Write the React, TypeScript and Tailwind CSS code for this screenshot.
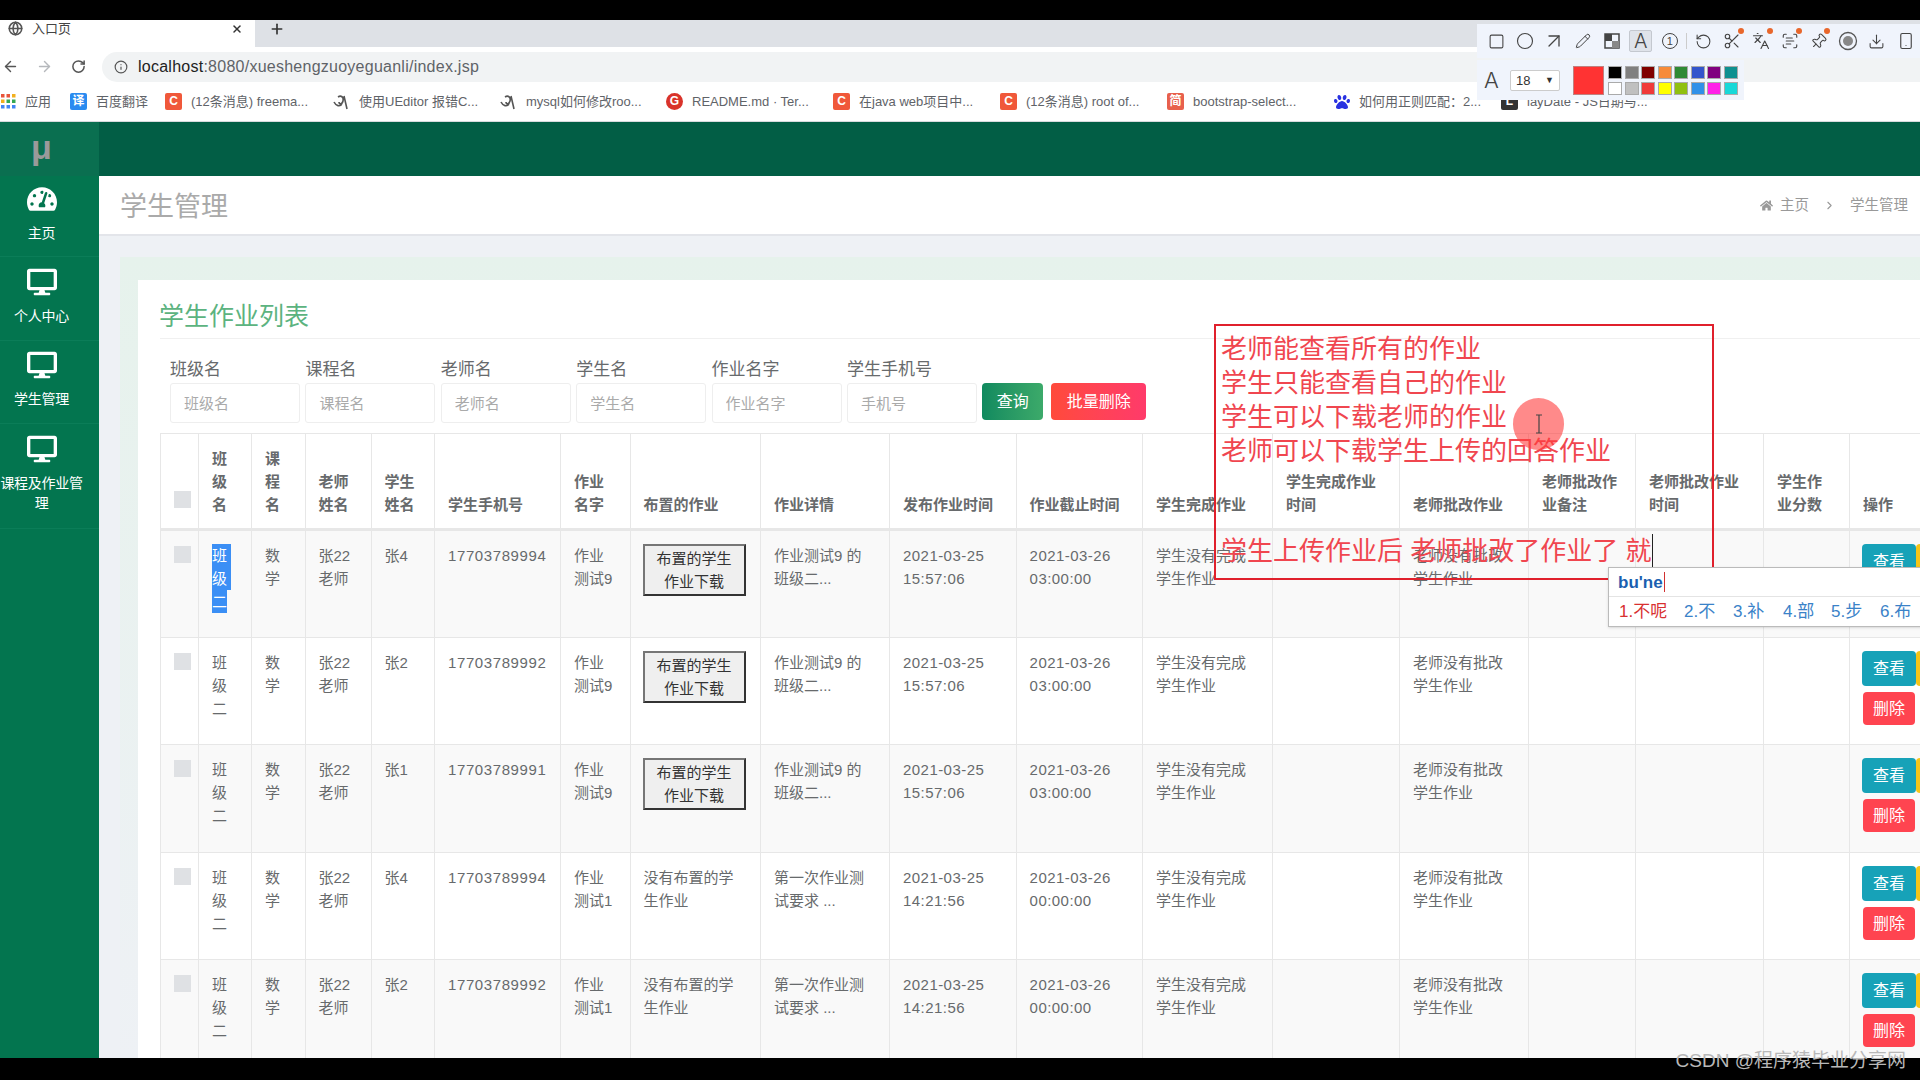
import { ArrowLeft, ArrowRight, ArrowUpRight, ChevronRight, Circle, Download, Globe, Info, Languages, Pencil, Pin, RotateCcw, RotateCw, ScanText, Scissors, Smartphone, Square, X, Plus } from "lucide-react";
import { FaDesktop, FaHome, FaPaw, FaTachometerAlt } from "react-icons/fa";
import type { ReactNode } from "react";

const colWidths = [
  "w-[38px]", "w-[53px]", "w-[53.5px]", "w-[66px]", "w-[63.5px]", "w-[126px]", "w-[69.5px]", "w-[130.5px]", "w-[129px]",
  "w-[126.6px]", "w-[126.4px]", "w-[130px]", "w-[127px]", "w-[129px]", "w-[107px]", "w-[128px]", "w-[86px]", "w-[111px]",
];

const headers = [
  "", "班\n级\n名", "课\n程\n名", "老师\n姓名", "学生\n姓名", "学生手机号", "作业\n名字", "布置的作业", "作业详情", "发布作业时间",
  "作业截止时间", "学生完成作业", "学生完成作业\n时间", "老师批改作业", "老师批改作\n业备注", "老师批改作业\n时间", "学生作\n业分数", "操作",
];

const rows = [
  { student: "张4", phone: "17703789994", work: "作业\n测试9", assigned: true, detail: "作业测试9 的\n班级二...", pub: "2021-03-25\n15:57:06", end: "2021-03-26\n03:00:00" },
  { student: "张2", phone: "17703789992", work: "作业\n测试9", assigned: true, detail: "作业测试9 的\n班级二...", pub: "2021-03-25\n15:57:06", end: "2021-03-26\n03:00:00" },
  { student: "张1", phone: "17703789991", work: "作业\n测试9", assigned: true, detail: "作业测试9 的\n班级二...", pub: "2021-03-25\n15:57:06", end: "2021-03-26\n03:00:00" },
  { student: "张4", phone: "17703789994", work: "作业\n测试1", assigned: false, detail: "第一次作业测\n试要求 ...", pub: "2021-03-25\n14:21:56", end: "2021-03-26\n00:00:00" },
  { student: "张2", phone: "17703789992", work: "作业\n测试1", assigned: false, detail: "第一次作业测\n试要求 ...", pub: "2021-03-25\n14:21:56", end: "2021-03-26\n00:00:00" },
  { student: "张1", phone: "17703789991", work: "作业\n测试1", assigned: false, detail: "第一次作业测\n试要求 ...", pub: "2021-03-25\n14:21:56", end: "2021-03-26\n00:00:00" },
];

const filters = [
  { label: "班级名", placeholder: "班级名" },
  { label: "课程名", placeholder: "课程名" },
  { label: "老师名", placeholder: "老师名" },
  { label: "学生名", placeholder: "学生名" },
  { label: "作业名字", placeholder: "作业名字" },
  { label: "学生手机号", placeholder: "手机号" },
];

const swatches = [
  "bg-[#000000]", "bg-[#808080]", "bg-[#800000]", "bg-[#f78b3a]", "bg-[#2f8a35]", "bg-[#3355cc]", "bg-[#800080]", "bg-[#0e9090]",
  "bg-[#ffffff]", "bg-[#c0c0c0]", "bg-[#f03a3a]", "bg-[#ffff00]", "bg-[#90c010]", "bg-[#3090e8]", "bg-[#ff20e8]", "bg-[#18d8d8]",
];

function LetterIcon({ text, className }: { text: string; className: string }) {
  return (
    <span className={`flex h-[17px] w-[17px] shrink-0 items-center justify-center rounded-[2px] text-[12px] font-bold text-white ${className}`}>
      {text}
    </span>
  );
}

function CurlIcon() {
  return (
    <svg viewBox="0 0 18 18" className="h-[18px] w-[18px] shrink-0" fill="none" stroke="#555" strokeWidth="1.6">
      <path d="M2 9c2 4 6 5 8 2M6 4c3-2 6 0 5 4s-4 3-4 1M12 3l3 13" />
    </svg>
  );
}

function Bookmark({ icon, text, className = "w-[167px]" }: { icon: ReactNode; text: string; className?: string }) {
  return (
    <div className={`flex shrink-0 items-center gap-[9px] ${className}`}>
      {icon}
      <span className="whitespace-nowrap text-[13px] text-[#5f6368]">{text}</span>
    </div>
  );
}

function SideItem({ icon, label, className }: { icon: ReactNode; label: string; className: string }) {
  return (
    <div className={`flex flex-col items-center border-b border-[#0b7d58] pr-[16px] text-white ${className}`}>
      {icon}
      <span className="mt-[10px] text-center text-[14px] leading-[20px] tracking-[-0.3px]">{label}</span>
    </div>
  );
}

function ToolIcon({ children, dot }: { children: ReactNode; dot?: boolean }) {
  return (
    <div className="relative flex h-[29px] w-[29.4px] items-center justify-center text-[#444]">
      {children}
      {dot && <span className="absolute right-[3px] top-[1px] h-[6px] w-[6px] rounded-full bg-[#e8672c]" />}
    </div>
  );
}

function Mosaic() {
  return (
    <svg viewBox="0 0 16 16" className="h-[16px] w-[16px]">
      <rect x="1" y="1" width="14" height="14" fill="none" stroke="#444" strokeWidth="1.5" />
      <rect x="1" y="1" width="7" height="7" fill="#444" />
      <rect x="8" y="8" width="7" height="7" fill="#888" />
    </svg>
  );
}

function RecordIcon() {
  return (
    <svg viewBox="0 0 20 20" className="h-[20px] w-[20px]">
      <circle cx="10" cy="10" r="8.5" fill="none" stroke="#555" strokeWidth="1.3" />
      <circle cx="10" cy="10" r="5" fill="#888" />
    </svg>
  );
}

function Cell({ children, className = "" }: { children?: ReactNode; className?: string }) {
  return (
    <td className={`whitespace-pre-line border border-[#e7e7e7] px-[13px] pt-[13px] align-top ${className}`}>{children}</td>
  );
}

export default function App() {
  return (
    <div className="relative flex h-screen w-[1920px] flex-col overflow-hidden bg-white font-['Liberation_Sans','Noto_Sans_CJK_SC',sans-serif] text-[15px] leading-[23px] text-[#676a6c]">
      <div className="h-[20px] shrink-0 bg-black" />

      {/* browser tab strip */}
      <div className="flex h-[27px] shrink-0 items-start bg-[#dee1e6]">
        <div className="flex h-full w-[255px] items-start bg-white pl-[8px] pr-[12px] pt-[1px]">
          <Globe className="h-[15px] w-[15px] text-[#555]" strokeWidth={2.5} />
          <span className="ml-[9px] flex-1 text-[13px] leading-[16px] text-[#444]">入口页</span>
          <X className="mt-[2px] h-[12px] w-[12px] text-[#333]" strokeWidth={3} />
        </div>
        <Plus className="ml-[14px] mt-[1px] h-[16px] w-[16px] text-[#333]" strokeWidth={2.5} />
      </div>

      {/* address bar */}
      <div className="flex h-[35px] shrink-0 items-start bg-white pl-[2px] pt-[5px]">
        <ArrowLeft className="mt-[6px] h-[17px] w-[17px] text-[#555]" />
        <ArrowRight className="ml-[17px] mt-[6px] h-[17px] w-[17px] text-[#b5b8bc]" />
        <RotateCw className="ml-[18px] mt-[7px] h-[15px] w-[15px] text-[#555]" strokeWidth={2.4} />
        <div className="ml-[16px] flex h-[30px] flex-1 items-center rounded-l-[15px] bg-[#f1f3f4] pl-[12px]">
          <Info className="h-[14px] w-[14px] text-[#555]" />
          <span className="mb-[2px] ml-[10px] text-[16px] tracking-[0.25px] text-[#5f6368]">
            <span className="text-[#222]">localhost</span>:8080/xueshengzuoyeguanli/index.jsp
          </span>
        </div>
      </div>

      {/* bookmarks */}
      <div className="flex h-[40px] shrink-0 items-center border-b border-[#d8dadd] bg-white pl-[1px]">
        <div className="flex w-[69px] shrink-0 items-center gap-[9px]">
          <svg viewBox="0 0 15 15" className="h-[15px] w-[15px] shrink-0">
            <g fill="#e8543a"><rect x="0" y="0" width="3.5" height="3.5" /><rect x="5.5" y="0" width="3.5" height="3.5" /></g>
            <g fill="#f2b01e"><rect x="11" y="0" width="3.5" height="3.5" /><rect x="0" y="5.5" width="3.5" height="3.5" /></g>
            <g fill="#34a853"><rect x="5.5" y="5.5" width="3.5" height="3.5" /><rect x="11" y="5.5" width="3.5" height="3.5" /></g>
            <g fill="#4285f4"><rect x="0" y="11" width="3.5" height="3.5" /><rect x="5.5" y="11" width="3.5" height="3.5" /><rect x="11" y="11" width="3.5" height="3.5" /></g>
          </svg>
          <span className="text-[13px] text-[#5f6368]">应用</span>
        </div>
        <Bookmark className="w-[95px]" icon={<LetterIcon text="译" className="bg-[#2a8bf0]" />} text="百度翻译" />
        <Bookmark icon={<LetterIcon text="C" className="bg-[#f0583a]" />} text="(12条消息) freema..." />
        <Bookmark icon={<CurlIcon />} text="使用UEditor 报错C..." />
        <Bookmark icon={<CurlIcon />} text="mysql如何修改roo..." />
        <Bookmark icon={<LetterIcon text="G" className="rounded-full bg-[#d9332a]" />} text="README.md · Ter..." />
        <Bookmark icon={<LetterIcon text="C" className="bg-[#f0583a]" />} text="在java web项目中..." />
        <Bookmark icon={<LetterIcon text="C" className="bg-[#f0583a]" />} text="(12条消息) root of..." />
        <Bookmark icon={<LetterIcon text="简" className="bg-[#e8604c]" />} text="bootstrap-select..." />
        <Bookmark icon={<FaPaw className="h-[16px] w-[16px] shrink-0 text-[#2932e1]" />} text="如何用正则匹配：2..." />
        <Bookmark icon={<LetterIcon text="L" className="bg-[#333333]" />} text="layDate - JS日期与..." />
      </div>

      {/* app */}
      <div className="flex min-h-0 flex-1">
        <aside className="flex w-[99px] shrink-0 flex-col bg-[#03754f]">
          <div className="flex h-[54px] items-center justify-center bg-[#0a6f50] pb-[3px] pr-[16px] text-[34px] font-bold text-[#9a9a9a]">μ</div>
          <SideItem className="h-[81px] pt-[9px]" icon={<FaTachometerAlt className="h-[28px] w-[30px]" />} label="主页" />
          <SideItem className="h-[84px] pt-[11px]" icon={<FaDesktop className="h-[28px] w-[30px]" />} label="个人中心" />
          <SideItem className="h-[83px] pt-[10px]" icon={<FaDesktop className="h-[28px] w-[30px]" />} label="学生管理" />
          <SideItem className="h-[105px] pt-[11px]" icon={<FaDesktop className="h-[28px] w-[30px]" />} label="课程及作业管理" />
        </aside>

        <main className="flex min-w-0 flex-1 flex-col bg-[#eef1f5]">
          <div className="h-[54px] shrink-0 bg-[#025e45]" />
          <div className="flex h-[60px] shrink-0 items-center justify-between border-b-2 border-[#e3e5ea] bg-white pl-[21px] pr-[12px]">
            <span className="pt-[4px] text-[27px] text-[#aaaaaa]">学生管理</span>
            <div className="flex items-center text-[14.5px] text-[#999999]">
              <FaHome className="mr-[7px] h-[13px] w-[13px]" />
              <span>主页</span>
              <ChevronRight className="mx-[14px] h-[13px] w-[13px]" />
              <span>学生管理</span>
            </div>
          </div>

          <div className="min-h-0 flex-1 pl-[21px] pt-[21px]">
            <div className="h-full bg-gradient-to-b from-[#e6f2ec] to-[#eef1f5] pl-[18px] pt-[23px]">
              <div className="h-[900px] bg-white pl-[22px]">
                <div className="flex h-[59px] items-center border-b border-[#f0f0f0] pt-[15px] text-[25px] text-[#5cb380]">
                  <span className="-ml-[1px]">学生作业列表</span>
                </div>

                <div className="flex items-end pl-[10px] pt-[20px]">
                  {filters.map((f) => (
                    <div key={f.label} className="mr-[5.4px] flex w-[130px] shrink-0 flex-col">
                      <label className="h-[24px] text-[17px] leading-[21px]">{f.label}</label>
                      <input
                        placeholder={f.placeholder}
                        className="h-[40px] w-full rounded-[3px] border border-[#eeeeee] bg-white pl-[13px] text-[15px] outline-none placeholder:text-[#aaaaaa]"
                      />
                    </div>
                  ))}
                  <div className="flex h-[40px] items-start">
                    <button className="h-[37px] w-[61px] rounded-[4px] bg-gradient-to-r from-[#0f8a5f] to-[#3caa6a] text-[16px] text-white">查询</button>
                    <button className="ml-[8px] h-[37px] w-[95px] rounded-[4px] bg-gradient-to-r from-[#ff4a3a] to-[#ff3a6a] text-[16px] text-white">批量删除</button>
                  </div>
                </div>

                <table className="mt-[10px] w-[1800px] table-fixed border-collapse">
                  <colgroup>
                    {colWidths.map((w, i) => (
                      <col key={i} className={w} />
                    ))}
                  </colgroup>
                  <thead>
                    <tr className="h-[96px]">
                      {headers.map((h, i) => (
                        <th key={i} className="whitespace-pre-line border border-b-[3px] border-[#e7e7e7] px-[13px] pb-[12px] text-left align-bottom font-bold">
                          {i === 0 ? <span className="mb-[8px] block h-[17px] w-[17px] bg-[#dfe1e4]" /> : h}
                        </th>
                      ))}
                    </tr>
                  </thead>
                  <tbody>
                    {rows.map((r, i) => (
                      <tr key={i} className={`h-[107.5px] ${i % 2 === 0 ? "bg-[#f9f9f9]" : "bg-white"}`}>
                        <Cell><span className="mt-[2px] block h-[17px] w-[17px] bg-[#dfe1e4]" /></Cell>
                        <Cell>
                          {i === 0 ? (
                            <span className="block text-white">
                              <span className="block w-[19px] bg-[#3b8ff5]">班</span>
                              <span className="block w-[19px] bg-[#3b8ff5]">级</span>
                              <span className="block w-[15px] bg-[#3b8ff5]">二</span>
                            </span>
                          ) : "班\n级\n二"}
                        </Cell>
                        <Cell>{"数\n学"}</Cell>
                        <Cell>{"张22\n老师"}</Cell>
                        <Cell>{r.student}</Cell>
                        <Cell className="tracking-[0.6px]">{r.phone}</Cell>
                        <Cell>{r.work}</Cell>
                        <Cell>
                          {r.assigned ? (
                            <button className="-ml-[1px] h-[52px] w-[103px] border-2 border-b-[#333333] border-l-[#767676] border-r-[#333333] border-t-[#767676] bg-[#efefef] text-[#333333]">
                              {"布置的学生"}
                              <br />
                              {"作业下载"}
                            </button>
                          ) : "没有布置的学\n生作业"}
                        </Cell>
                        <Cell>{r.detail}</Cell>
                        <Cell className="tracking-[0.45px]">{r.pub}</Cell>
                        <Cell className="tracking-[0.45px]">{r.end}</Cell>
                        <Cell>{"学生没有完成\n学生作业"}</Cell>
                        <Cell />
                        <Cell>{"老师没有批改\n学生作业"}</Cell>
                        <Cell />
                        <Cell />
                        <Cell />
                        <Cell>
                          <div className="flex -ml-[1px]">
                            <button className="h-[35px] w-[54px] shrink-0 rounded-[4px] bg-[#17a2b8] text-[16px] text-white">查看</button>
                            <span className="h-[35px] w-[20px] shrink-0 rounded-[4px] bg-[#f5c518]" />
                          </div>
                          <button className="mt-[6px] block h-[33px] w-[52px] rounded-[4px] bg-[#ff4450] text-[16px] text-white">删除</button>
                        </Cell>
                      </tr>
                    ))}
                  </tbody>
                </table>
              </div>
            </div>
          </div>
        </main>
      </div>

      <div className="h-[22px] shrink-0 bg-black" />

      {/* screenshot tool, upper row */}
      <div className="absolute left-[1477px] top-[24px] flex h-[34px] w-[443px] items-center bg-[#f0f4fc] pl-[5px]">
        <ToolIcon><Square className="h-[17px] w-[17px]" strokeWidth={1.5} /></ToolIcon>
        <ToolIcon><Circle className="h-[18px] w-[18px]" strokeWidth={1.5} /></ToolIcon>
        <ToolIcon><ArrowUpRight className="h-[24px] w-[24px]" strokeWidth={1.3} /></ToolIcon>
        <ToolIcon><Pencil className="h-[16px] w-[16px]" strokeWidth={1.5} /></ToolIcon>
        <ToolIcon><Mosaic /></ToolIcon>
        <ToolIcon>
          <span className="flex h-[22px] w-[23px] items-center justify-center rounded-[2px] border border-[#c4c8cf] bg-[#dfe3ea] font-['Inter',sans-serif] text-[20px] font-light text-[#444]">A</span>
        </ToolIcon>
        <ToolIcon>
          <span className="flex h-[16px] w-[16px] items-center justify-center rounded-full border border-[#444] text-[11px] leading-none">1</span>
        </ToolIcon>
        <div className="flex w-[5px] justify-center"><span className="h-[16px] w-px bg-[#cccccc]" /></div>
        <ToolIcon><RotateCcw className="h-[17px] w-[17px]" strokeWidth={1.5} /></ToolIcon>
        <ToolIcon dot><Scissors className="h-[18px] w-[18px]" strokeWidth={1.5} /></ToolIcon>
        <ToolIcon dot><Languages className="h-[18px] w-[18px]" strokeWidth={1.5} /></ToolIcon>
        <ToolIcon dot><ScanText className="h-[18px] w-[18px]" strokeWidth={1.5} /></ToolIcon>
        <ToolIcon dot><Pin className="h-[17px] w-[17px] rotate-45" strokeWidth={1.5} /></ToolIcon>
        <ToolIcon><RecordIcon /></ToolIcon>
        <ToolIcon><Download className="h-[17px] w-[17px]" strokeWidth={1.5} /></ToolIcon>
        <ToolIcon><Smartphone className="h-[18px] w-[18px]" strokeWidth={1.5} /></ToolIcon>
      </div>

      {/* screenshot tool, lower row */}
      <div className="absolute left-[1477px] top-[60px] flex h-[40px] w-[267px] items-center bg-[#f0f4fc]">
        <span className="ml-[7px] w-[26px] font-['Inter',sans-serif] text-[22px] font-light text-[#444]">A</span>
        <div className="flex h-[21px] w-[50px] items-center justify-between rounded-[2px] border border-[#cccccc] bg-white px-[5px] text-[13px] text-[#333]">
          18
          <span className="text-[9px]">▼</span>
        </div>
        <span className="ml-[13px] h-[29px] w-[31px] border border-[#c08080] bg-[#ff3333]" />
        <div className="ml-[4px] grid w-[130px] grid-cols-8 gap-x-[2px] gap-y-[3px]">
          {swatches.map((c) => (
            <span key={c} className={`h-[13px] w-[14px] border border-[#aaaaaa] ${c}`} />
          ))}
        </div>
      </div>

      {/* hand-drawn annotation */}
      <div className="absolute left-[1214px] top-[324px] h-[256px] w-[500px] border-2 border-[#e0202c] pl-[5px] pt-[6px] text-[26px] leading-[34px] text-[#f0464f]">
        <div>老师能查看所有的作业</div>
        <div>学生只能查看自己的作业</div>
        <div>学生可以下载老师的作业</div>
        <div>老师可以下载学生上传的回答作业</div>
        <div className="mt-[66px] flex h-[34px] items-center whitespace-pre">
          学生上传作业后 老师批改了作业了 就
          <span className="ml-[1px] h-[34px] w-[1px] bg-[#222222]" />
        </div>
      </div>

      <div className="absolute left-[1513px] top-[398px] flex h-[52px] w-[51px] items-center justify-center rounded-full bg-[#ff3c3c]/60">
        <svg viewBox="0 0 10 20" className="h-[20px] w-[10px]" fill="none" stroke="#444" strokeWidth="1.2">
          <path d="M2 1h6M5 1v18M2 19h6" />
        </svg>
      </div>

      {/* IME candidates */}
      <div className="absolute left-[1608px] top-[567px] h-[60px] w-[320px] border border-[#bbbbbb] bg-white shadow-sm">
        <div className="flex h-[29px] items-center border-b border-[#e4e4e4] pl-[9px] text-[17px] font-bold text-[#1a5fb0]">
          bu'ne
          <span className="ml-[1px] h-[20px] w-px bg-[#d03030]" />
        </div>
        <div className="flex h-[29px] items-center pl-[10px] text-[17px] text-[#3a82c8]">
          <span className="w-[65px] text-[#d83030]">1.不呢</span>
          <span className="w-[49px]">2.不</span>
          <span className="w-[50px]">3.补</span>
          <span className="w-[48px]">4.部</span>
          <span className="w-[49px]">5.步</span>
          <span>6.布</span>
        </div>
      </div>

      <div className="absolute right-[14px] top-[1049px] text-[19px] text-[#b8b8b8]">CSDN @程序猿毕业分享网</div>
    </div>
  );
}
